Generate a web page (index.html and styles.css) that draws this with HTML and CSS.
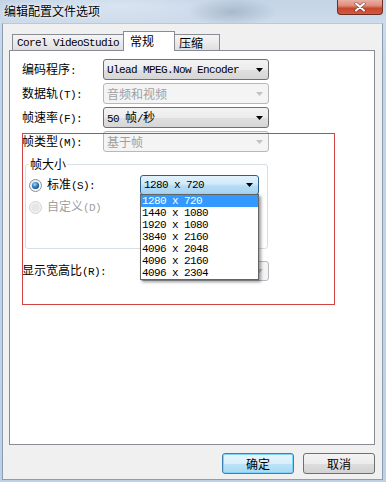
FILE: index.html
```html
<!DOCTYPE html>
<html lang="zh-CN">
<head>
<meta charset="utf-8">
<title>编辑配置文件选项</title>
<link rel="stylesheet" href="styles.css">
</head>
<body>
<div class="window">
  <div class="titlebar">
    <span class="title">编辑配置文件选项</span>
    <div class="close">
      <svg width="12" height="10" viewBox="0 0 12 10">
        <path d="M2 1.5 L10 8.5 M10 1.5 L2 8.5" stroke="#4a2a2a" stroke-width="3.4" stroke-linecap="round" opacity="0.55"/>
        <path d="M2 1.5 L10 8.5 M10 1.5 L2 8.5" stroke="#ffffff" stroke-width="2" stroke-linecap="round"/>
      </svg>
    </div>
  </div>
  <div class="client">
    <div class="tabctl">
      <div class="tabs">
        <div class="tab t1"><span class="lat">Corel VideoStudio</span></div>
        <div class="tab t2 active">常规</div>
        <div class="tab t3">压缩</div>
      </div>
      <div class="panel">
        <div class="form">
          <div class="row">
            <span class="lbl">编码程序<span class="lat">:</span></span>
            <div class="combo">
              <span class="val lat">Ulead MPEG.Now Encoder</span>
              <svg class="arrow" width="7" height="4" viewBox="0 0 7 4"><polygon points="0,0 7,0 3.5,4" fill="#000"/></svg>
            </div>
          </div>
          <div class="row">
            <span class="lbl">数据轨<span class="lat">(T):</span></span>
            <div class="combo disabled">
              <span class="val">音频和视频</span>
              <svg class="arrow" width="7" height="4" viewBox="0 0 7 4"><polygon points="0,0 7,0 3.5,4" fill="#c2c2c2"/></svg>
            </div>
          </div>
          <div class="row">
            <span class="lbl">帧速率<span class="lat">(F):</span></span>
            <div class="combo">
              <span class="val"><span class="lat">50 </span>帧<span class="lat">/</span>秒</span>
              <svg class="arrow" width="7" height="4" viewBox="0 0 7 4"><polygon points="0,0 7,0 3.5,4" fill="#000"/></svg>
            </div>
          </div>
          <div class="row">
            <span class="lbl">帧类型<span class="lat">(M):</span></span>
            <div class="combo disabled">
              <span class="val">基于帧</span>
              <svg class="arrow" width="7" height="4" viewBox="0 0 7 4"><polygon points="0,0 7,0 3.5,4" fill="#c2c2c2"/></svg>
            </div>
          </div>
        </div>

        <fieldset class="group">
          <legend>帧大小</legend>
          <div class="rrow">
            <svg class="radio" width="13" height="13" viewBox="0 0 13 13">
              <defs>
                <linearGradient id="rg1" x1="0" y1="0" x2="1" y2="1">
                  <stop offset="0" stop-color="#e4e4e4"/>
                  <stop offset="1" stop-color="#ffffff"/>
                </linearGradient>
                <radialGradient id="rd1" cx="0.4" cy="0.35" r="0.7">
                  <stop offset="0" stop-color="#a9dcf7"/>
                  <stop offset="0.45" stop-color="#3a8ed0"/>
                  <stop offset="1" stop-color="#123f74"/>
                </radialGradient>
              </defs>
              <circle cx="6.5" cy="6.5" r="6" fill="url(#rg1)" stroke="#8a8f94"/>
              <circle cx="6.5" cy="6.5" r="3.6" fill="url(#rd1)"/>
            </svg>
            <span class="rlbl">标准<span class="lat">(S):</span></span>
            <div class="combo open">
              <span class="val lat">1280 x 720</span>
              <svg class="arrow" width="7" height="4" viewBox="0 0 7 4"><polygon points="0,0 7,0 3.5,4" fill="#000"/></svg>
            </div>
          </div>
          <div class="rrow">
            <svg class="radio" width="13" height="13" viewBox="0 0 13 13">
              <circle cx="6.5" cy="6.5" r="6" fill="#f2f2f2" stroke="#cfd2d4"/>
              <circle cx="6.5" cy="6.5" r="4" fill="#e6e6e6"/>
            </svg>
            <span class="rlbl dis">自定义<span class="lat">(D)</span></span>
          </div>
        </fieldset>

        <div class="row arow">
          <span class="albl">显示宽高比<span class="lat">(R):</span></span>
          <div class="combo disabled wide">
            <span class="val"></span>
            <svg class="arrow" width="7" height="4" viewBox="0 0 7 4"><polygon points="0,0 7,0 3.5,4" fill="#c2c2c2"/></svg>
          </div>
        </div>

        <div class="annot"></div>

        <ul class="dropdown">
          <li class="sel lat">1280 x 720</li>
          <li class="lat">1440 x 1080</li>
          <li class="lat">1920 x 1080</li>
          <li class="lat">3840 x 2160</li>
          <li class="lat">4096 x 2048</li>
          <li class="lat">4096 x 2160</li>
          <li class="lat">4096 x 2304</li>
        </ul>
      </div>
    </div>
    <div class="buttons">
      <div class="btn default">确定</div>
      <div class="btn">取消</div>
    </div>
  </div>
</div>
</body>
</html>
```

FILE: styles.css
```css
* { box-sizing: border-box; }

html, body {
  margin: 0;
  padding: 0;
}

body {
  width: 386px;
  height: 482px;
  overflow: hidden;
  font-family: "Noto Sans CJK SC", "Liberation Sans", sans-serif;
  font-size: 12px;
  line-height: 14px;
  color: #000;
}

.lat {
  font-family: "Liberation Mono", "Noto Sans CJK SC", monospace;
  font-size: 11px;
  letter-spacing: -0.6px;
}

.window {
  width: 386px;
  height: 482px;
  display: flex;
  flex-direction: column;
  background:
    radial-gradient(ellipse 45px 14px at 232px 12px, rgba(110, 128, 150, 0.35), rgba(110, 128, 150, 0)),
    radial-gradient(ellipse 120px 18px at 120px 6px, rgba(230, 238, 247, 0.6), rgba(230, 238, 247, 0)),
    linear-gradient(180deg, #c3d4e7 0, #cddbea 22px, #c2d5ea 60px, #bcd1e8 100%);
}

.titlebar {
  height: 23px;
  flex: none;
  display: flex;
  align-items: flex-start;
}

.title {
  padding: 4px 0 0 4px;
  line-height: 14px;
  color: #000;
  text-shadow: 0 0 5px rgba(255, 255, 255, 0.9), 0 0 2px rgba(255, 255, 255, 0.8);
}

.close {
  margin-left: auto;
  margin-right: 3px;
  width: 46px;
  height: 15px;
  border: 1px solid #6a2e25;
  border-top: none;
  border-radius: 0 0 4px 4px;
  background: linear-gradient(180deg, #e9b1a4 0, #dd8c78 40%, #c9472f 60%, #d25a3f 100%);
  display: flex;
  align-items: center;
  justify-content: center;
}

.client {
  flex: 1;
  margin: 0 3px 2px 2px;
  border: 1px solid #8c9db2;
  border-top-color: #b9c9dc;
  background: #f0f0f0;
  padding: 7px 7px 5px 6px;
  display: flex;
  flex-direction: column;
}

.tabctl {
  flex: 1;
  display: flex;
  flex-direction: column;
}

.tabs {
  height: 19px;
  flex: none;
  display: flex;
  align-items: flex-end;
  padding-left: 3px;
}

.tab {
  height: 16px;
  border: 1px solid #898c95;
  border-bottom: none;
  background: linear-gradient(180deg, #f5f5f5 0, #ebebeb 50%, #dfdfdf 100%);
  display: flex;
  align-items: center;
  margin-left: -1px;
  padding-left: 4px;
}

.t1 { margin-left: 0; width: 112px; }
.t2 { width: 52px; padding-left: 6px; }
.t3 { width: 46px; padding-left: 4px; padding-top: 1px; }

.tab.active {
  height: 20px;
  margin-bottom: -1px;
  background: #fff;
  position: relative;
  z-index: 1;
  padding-bottom: 1px;
}

.panel {
  flex: 1;
  background: #fff;
  border: 1px solid #898c95;
  position: relative;
  padding: 8px 0 0 12px;
}

.form {
  display: flex;
  flex-direction: column;
  gap: 3px;
}

.row {
  display: flex;
  align-items: center;
  height: 21px;
}

.lbl {
  width: 81px;
  flex: none;
  white-space: nowrap;
}

.combo {
  width: 166px;
  height: 21px;
  flex: none;
  border: 1px solid #707070;
  border-radius: 3px;
  background: linear-gradient(180deg, #f3f3f3 0, #ececec 50%, #e0e0e0 50%, #d6d6d6 100%);
  display: flex;
  align-items: center;
  padding: 0 5px 0 3px;
  white-space: nowrap;
}

.combo .val {
  flex: 1;
  line-height: 16px;
}

.combo .arrow {
  flex: none;
}

.combo.disabled {
  border-color: #b5b9bd;
  background: #f4f4f4;
  color: #a0a0a0;
}

.combo.open {
  width: 119px;
  height: 20px;
  border-color: #2c628b;
  background: linear-gradient(180deg, #e3f2fb 0, #d0eafa 45%, #b4dcf5 55%, #a6d3f0 100%);
}

.group {
  margin: 5px 0 0 3px;
  width: 243px;
  min-inline-size: 0;
  border: 1px solid #d5dfe5;
  border-radius: 3px;
  padding: 4px 0 31px 3px;
}

.group legend {
  padding: 0 1px;
  line-height: 14px;
}

.rrow {
  display: flex;
  align-items: center;
  height: 20px;
}

.rrow + .rrow {
  margin-top: 2px;
}

.radio {
  flex: none;
  margin-right: 5px;
}

.rlbl {
  width: 93px;
  flex: none;
  white-space: nowrap;
}

.rlbl.dis {
  color: #a0a0a0;
}

.arow {
  margin-top: 12px;
  height: 20px;
}

.albl {
  width: 118px;
  flex: none;
  white-space: nowrap;
}

.combo.wide {
  width: 129px;
  height: 20px;
}

.annot {
  position: absolute;
  left: 12px;
  top: 82px;
  width: 313px;
  height: 172px;
  border: 1px solid #d24343;
  pointer-events: none;
}

.dropdown {
  position: absolute;
  left: 130px;
  top: 143px;
  width: 119px;
  margin: 0;
  padding: 0;
  list-style: none;
  background: #fff;
  border: 1px solid #646464;
  box-shadow: 2px 2px 3px rgba(0, 0, 0, 0.4);
  z-index: 2;
}

.dropdown li {
  height: 12px;
  line-height: 12px;
  padding-left: 1px;
  white-space: nowrap;
}

.dropdown li.sel {
  background: #3399ff;
  color: #fff;
}

.buttons {
  flex: none;
  height: 21px;
  margin-top: 8px;
  display: flex;
  justify-content: flex-end;
  gap: 9px;
}

.btn {
  width: 72px;
  height: 21px;
  border: 1px solid #707070;
  border-radius: 3px;
  background: linear-gradient(180deg, #f3f3f3 0, #ececec 50%, #dedede 50%, #d2d2d2 100%);
  display: flex;
  align-items: center;
  justify-content: center;
}

.btn.default {
  border-color: #3c7fb1;
  background: linear-gradient(180deg, #e8f5fc 0, #d8effb 50%, #bde4f8 50%, #a8d8f3 100%);
  box-shadow: inset 0 0 0 1px #7fd3f6;
}
```
